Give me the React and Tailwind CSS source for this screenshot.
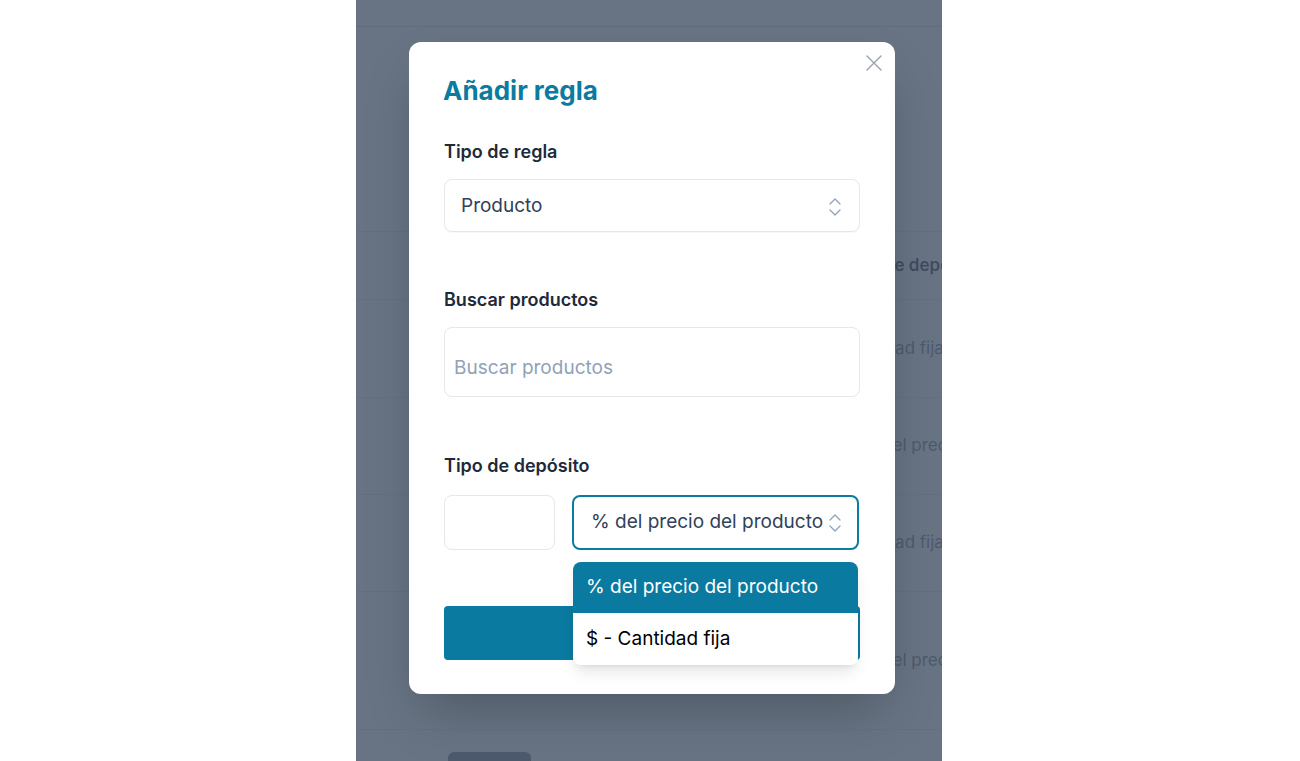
import React from 'react';

const rows = [
  { value: 'Cantidad fija', h: 'h-[98px]' },
  { value: '10% del precio', h: 'h-[97px]' },
  { value: 'Cantidad fija', h: 'h-[97px]' },
  { value: '10% del precio', h: 'h-[138px]' },
];

function Chevrons({ className = '' }) {
  return (
    <svg viewBox="0 0 24 24" className={className} fill="none" stroke="currentColor" strokeWidth="1.3" strokeLinecap="round" strokeLinejoin="round">
      <path d="m7 15 5 5 5-5" />
      <path d="m7 9 5-5 5 5" />
    </svg>
  );
}

function BackgroundPage() {
  return (
    <div className="flex flex-col">
      <div className="h-[27px] border-b border-gray-300" />
      <div className="h-[205px] border-b border-gray-200" />
      <div className="h-[68px] flex items-center border-b border-gray-200">
        <div className="flex-1" />
        <div className="w-[99px] shrink-0 overflow-hidden whitespace-nowrap text-[17px] font-semibold text-gray-800">Tipo de depósito</div>
      </div>
      {rows.map((r, i) => (
        <div key={i} className={`${r.h} flex items-center border-b border-gray-200`}>
          <div className="flex-1" />
          <div className="w-[99px] shrink-0 overflow-hidden whitespace-nowrap text-[17px] text-gray-500">{r.value}</div>
        </div>
      ))}
      <div className="pt-[22px] pl-[92px]">
        <div className="w-[83px] h-[36px] rounded-md bg-gray-500" />
      </div>
    </div>
  );
}

function RuleModal() {
  return (
    <div className="relative w-[486px] ml-[53px] mt-[42px] bg-white rounded-xl shadow-2xl px-[35px] pt-[33px] pb-[34px]">
      <button className="absolute top-[13px] right-[13px] text-gray-400">
        <svg viewBox="0 0 16 16" className="w-[16px] h-[16px]" fill="none" stroke="currentColor" strokeWidth="1.4" strokeLinecap="round">
          <path d="M1 1l14 14M15 1L1 15" />
        </svg>
      </button>

      <h2 className="text-[26px] leading-[32px] font-bold text-[#0b7ba1] -ml-px">Añadir regla</h2>

      <label className="block mt-[33px] text-[18px] leading-[24px] font-semibold text-gray-800">Tipo de regla</label>
      <div className="mt-[15px] h-[53px] flex items-center justify-between rounded-lg border border-gray-200 pl-[16px] pr-[12px] pt-[2px] shadow-[0_1px_1px_rgba(0,0,0,0.03)]">
        <span className="text-[19px] text-slate-700">Producto</span>
        <Chevrons className="w-[24px] h-[24px] text-slate-400" />
      </div>

      <label className="block mt-[56px] text-[18px] leading-[24px] font-semibold text-gray-800">Buscar productos</label>
      <div className="mt-[15px] h-[70px] flex items-center rounded-lg border border-gray-200 pl-[9px] pt-[12px]">
        <span className="text-[19px] text-slate-400">Buscar productos</span>
      </div>

      <label className="block mt-[57px] text-[18px] leading-[24px] font-semibold text-gray-800">Tipo de depósito</label>
      <div className="mt-[17px] flex gap-[17px]">
        <div className="w-[111px] h-[55px] shrink-0 rounded-lg border border-gray-200" />
        <div className="relative w-[287px] shrink-0">
          <div className="h-[55px] flex items-center justify-between rounded-lg border-2 border-[#0b7ba1] pl-[17px] pr-[13px]">
            <span className="text-[19px] text-slate-700 whitespace-nowrap">% del precio del producto</span>
            <Chevrons className="w-[24px] h-[24px] shrink-0 text-slate-400" />
          </div>
          <div className="absolute left-[1px] right-[1px] top-[67px] z-10 rounded-lg bg-white shadow-lg overflow-hidden">
            <div className="h-[51px] flex items-center px-[13px] bg-[#0a7aa0] text-white text-[19px]">% del precio del producto</div>
            <div className="h-[52px] flex items-center px-[13px] bg-white text-black text-[19px]">$ - Cantidad fija</div>
          </div>
        </div>
      </div>

      <button className="block mt-[56px] w-full h-[54px] rounded bg-[#0a7aa0]" aria-label="Guardar" />
    </div>
  );
}

export default function App() {
  return (
    <div className="w-full min-h-screen bg-white flex pl-[356px]" style={{ fontFamily: 'Inter, "Noto Sans", sans-serif' }}>
      <div className="relative w-[586px] h-[761px] overflow-hidden bg-white">
        <BackgroundPage />
        <div className="absolute inset-0 bg-[#475569]/[0.82]" />
        <div className="absolute inset-0">
          <RuleModal />
        </div>
      </div>
    </div>
  );
}
